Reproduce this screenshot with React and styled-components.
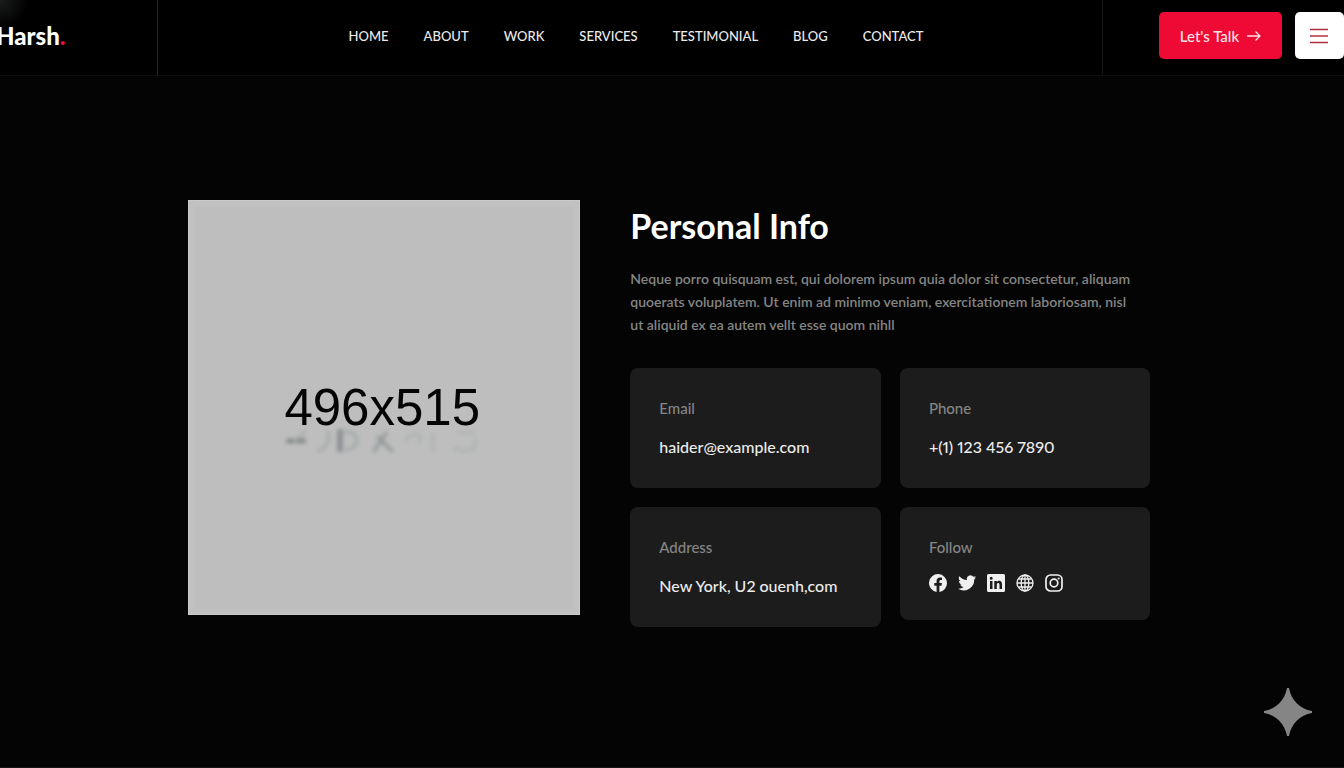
import React from "react";
import styled, { createGlobalStyle } from "styled-components";

const GlobalStyle = createGlobalStyle`
  * { box-sizing: border-box; }
  html { background: #040404; }
  body {
    margin: 0;
    min-height: 100vh;
    color: #f4f4f4;
    background: #040404;
    font-family: Lato, "Liberation Sans", sans-serif;
    font-variant-numeric: proportional-nums;
    overflow-x: hidden;
  }
  h1, p, dl, dt, dd, ul, figure { margin: 0; padding: 0; }
  a { color: inherit; text-decoration: none; }
`;

const Page = styled.div`
  display: flex;
  flex-direction: column;
  min-height: 100vh;
  border-bottom: 1px solid #161616;
`;

const Header = styled.header`
  display: grid;
  grid-template-columns: 158px 1fr 242px;
  height: 76px;
  background: #000;
  border-bottom: 1px solid #101010;
`;

const LogoCell = styled.div`
  display: flex;
  align-items: center;
  padding-bottom: 4px;
  overflow: hidden;
  border-right: 1px solid #242424;
  background: radial-gradient(circle at 0 0, #1b1d1d, transparent 28px);
`;

const Logo = styled.a`
  margin-left: -4px;
  font-size: 24px;
  line-height: 32px;
  font-weight: 900;
  color: #fff;
`;

const Dot = styled.span`
  color: #e8103c;
`;

const Nav = styled.nav`
  display: flex;
  align-items: center;
  justify-content: center;
  gap: 35px;
  padding: 0 0 4px 12px;
`;

const NavLink = styled.a`
  font-size: 13px;
  line-height: 20px;
  font-weight: 500;
  color: #ececec;
  white-space: nowrap;
`;

const Actions = styled.div`
  display: flex;
  align-items: center;
  justify-content: flex-end;
  gap: 13px;
  padding-bottom: 4px;
  border-left: 1px solid #141414;
`;

const TalkButton = styled.button`
  display: flex;
  align-items: center;
  justify-content: center;
  gap: 8px;
  width: 123px;
  height: 47px;
  padding: 0;
  border: 0;
  border-radius: 5px;
  background: #ee0a35;
  color: #ffe3e6;
  font: 500 15px/20px Lato, "Liberation Sans", sans-serif;
  white-space: nowrap;
`;

const MenuButton = styled.button`
  display: flex;
  align-items: center;
  justify-content: center;
  width: 49px;
  height: 47px;
  padding: 0 2px 0 0;
  border: 0;
  border-radius: 5px;
  background: #fff;
  color: #b5303f;
`;

const Main = styled.main`
  display: grid;
  grid-template-columns: 392fr 520fr;
  column-gap: 50px;
  align-items: start;
  padding: 124px 14.4% 60px 14%;
`;

const Photo = styled.figure`
  position: relative;
  display: flex;
  align-items: center;
  justify-content: center;
  height: 415px;
  padding-right: 4px;
  border: 1px solid #cbcbcb;
  background: #bebebe;
  box-shadow: inset 0 0 0 5px #c1c1c1;
  color: #050505;
  font: 51px/60px "Liberation Sans", sans-serif;
`;

const Reflection = styled.svg`
  position: absolute;
  top: 50%;
  left: 50%;
  width: 210px;
  height: 50px;
  margin: 12px 0 0 -106px;
`;

const Info = styled.section`
  padding-top: 4px;
`;

const Title = styled.h1`
  font-size: 34px;
  line-height: 44px;
  font-weight: 700;
  color: #fff;
`;

const Intro = styled.p`
  margin-top: 19px;
  font-size: 14px;
  line-height: 23px;
  font-weight: 600;
  color: #858583;
`;

const Line = styled.span`
  display: block;
  white-space: nowrap;
`;

const Cards = styled.dl`
  display: grid;
  grid-template-columns: 1fr 1fr;
  gap: 19px;
  align-items: start;
  margin-top: 32px;
`;

const Card = styled.div`
  padding: 29px 29px 0;
  height: ${(p) => (p.$short ? 113 : 120)}px;
  border-radius: 8px;
  background: #1c1c1c;
`;

const Label = styled.dt`
  font-size: 15px;
  line-height: 22px;
  font-weight: 500;
  color: #858585;
`;

const Value = styled.dd`
  margin-top: 16px;
  font-size: 16px;
  line-height: 24px;
  font-weight: 500;
  color: #ebebeb;
  white-space: nowrap;
`;

const Socials = styled.dd`
  display: flex;
  gap: 11px;
  margin: 16px 0 0;
`;

const SocialLink = styled.a`
  display: flex;
  color: #f0f0f0;
`;

const Spark = styled.svg`
  position: fixed;
  right: 32px;
  bottom: 32px;
  width: 48px;
  height: 48px;
`;

const navItems = ["Home", "About", "Work", "Services", "Testimonial", "Blog", "Contact"];

const contacts = [
  { label: "Email", value: "haider@example.com" },
  { label: "Phone", value: "+(1) 123 456 7890" },
  { label: "Address", value: "New York, U2 ouenh,com" },
];

const icons = {
  Facebook: (
    <path fill="currentColor" d="M18 9.05A9 9 0 1 0 7.6 18v-6.3H5.3V9.05h2.3v-2c0-2.3 1.35-3.5 3.4-3.5.95 0 2 .17 2 .17V6h-1.15c-1.1 0-1.45.7-1.45 1.4v1.65h2.5l-.4 2.65h-2.1V18A9 9 0 0 0 18 9.05Z" />
  ),
  Twitter: (
    <path fill="currentColor" d="M18 3.3a7 7 0 0 1-2 .6 3.6 3.6 0 0 0 1.6-2c-.7.4-1.5.7-2.3.9a3.6 3.6 0 0 0-6.3 3.3A10.4 10.4 0 0 1 1.4 2.2a3.7 3.7 0 0 0 1.2 5c-.6 0-1.2-.2-1.7-.5 0 1.9 1.2 3.4 2.9 3.8-.5.1-1.1.1-1.6 0 .5 1.5 1.8 2.5 3.4 2.6A7.5 7.5 0 0 1 0 14.7a10.5 10.5 0 0 0 16.2-9.3A7 7 0 0 0 18 3.3Z" />
  ),
  LinkedIn: (
    <path fill="currentColor" fillRule="evenodd" d="M1.5 0h15q1.5 0 1.5 1.5v15q0 1.5-1.5 1.5h-15Q0 18 0 16.5v-15Q0 0 1.5 0ZM3 7v8h2.500V7ZM4.200 2.800a1.500 1.500 0 1 0 0 3 1.500 1.500 0 0 0 0-3ZM7.300 7v8h2.500v-4.200c0-2.200 2.700-2.300 2.700 0V15H15v-5c0-3.500-3.800-4-5.200-1.900V7Z" />
  ),
  Website: (
    <g fill="none" stroke="currentColor" strokeWidth="1.3">
      <circle cx="9" cy="9" r="8" />
      <ellipse cx="9" cy="9" rx="3.8" ry="8" />
      <path d="M9 1v16M1 9h16M2.300 5h13.400M2.300 13h13.400" />
    </g>
  ),
  Instagram: (
    <g fill="none" stroke="currentColor" strokeWidth="1.7">
      <rect x="1" y="1" width="16" height="16" rx="4.5" />
      <circle cx="9" cy="9" r="3.8" />
      <circle cx="13.6" cy="4.4" r="1" fill="currentColor" stroke="none" />
    </g>
  ),
};

export default function App() {
  return (
    <Page>
      <GlobalStyle />
      <Header>
        <LogoCell>
          <Logo href="#home">Harsh<Dot>.</Dot></Logo>
        </LogoCell>
        <Nav aria-label="Main">
          {navItems.map((item) => (
            <NavLink key={item} href={`#${item.toLowerCase()}`}>{item.toUpperCase()}</NavLink>
          ))}
        </Nav>
        <Actions>
          <TalkButton type="button">
            Let's Talk
            <svg width="14" height="12" viewBox="0 0 14 12" fill="none" stroke="currentColor" strokeWidth="1.3" aria-hidden="true">
              <path d="M0 6h13M8.500 1.500 13 6l-4.500 4.500" />
            </svg>
          </TalkButton>
          <MenuButton type="button" aria-label="Menu">
            <svg width="18" height="16" viewBox="0 0 18 16" fill="none" stroke="currentColor" strokeWidth="1.7" aria-hidden="true">
              <path d="M0 1.500h18M0 8h18M0 14.500h18" />
            </svg>
          </MenuButton>
        </Actions>
      </Header>

      <Main>
        <Photo>
          496x515
          <Reflection viewBox="0 0 210 50" fill="none" aria-hidden="true">
            <defs>
              <filter id="soften" x="-20%" y="-40%" width="140%" height="180%">
                <feGaussianBlur stdDeviation="2" />
              </filter>
            </defs>
            <g filter="url(#soften)" strokeLinecap="round">
              <path d="M10 21h16" stroke="#777b7c" strokeWidth="4" />
              <path d="m27 12-10 9m33-9c2 9-2 17-10 19" stroke="#a4a8a9" strokeWidth="3" />
              <path d="M62 11v19" stroke="#858a8c" strokeWidth="5" />
              <path d="M65 12c16-3 20 16 3 18" stroke="#a3a8aa" strokeWidth="3" />
              <path d="m108 13-12 18m4-14 14 14" stroke="#8d9294" strokeWidth="3" />
              <path d="M128 21c3-10 22-8 12 2M155 13v17M176 28c14 6 24 2 21-9M180 13h16" stroke="#adb1b2" strokeWidth="3" />
            </g>
          </Reflection>
        </Photo>

        <Info>
          <Title>Personal Info</Title>
          <Intro>
            <Line>Neque porro quisquam est, qui dolorem ipsum quia dolor sit consectetur, aliquam</Line>
            <Line>quoerats voluplatem. Ut enim ad minimo veniam, exercitationem laboriosam, nisl</Line>
            <Line>ut aliquid ex ea autem vellt esse quom nihll</Line>
          </Intro>
          <Cards>
            {contacts.map(({ label, value }) => (
              <Card key={label}>
                <Label>{label}</Label>
                <Value>{value}</Value>
              </Card>
            ))}
            <Card $short>
              <Label>Follow</Label>
              <Socials>
                {Object.entries(icons).map(([name, drawing]) => (
                  <SocialLink key={name} href={`#${name.toLowerCase()}`} aria-label={name}>
                    <svg width="18" height="18" viewBox="0 0 18 18" aria-hidden="true">{drawing}</svg>
                  </SocialLink>
                ))}
              </Socials>
            </Card>
          </Cards>
        </Info>
      </Main>

      <Spark viewBox="0 0 48 48" aria-hidden="true">
        <path fill="#858585" d="M23 0h2c2 12 11 21 23 23v2c-12 2-21 11-23 23h-2C21 36 12 27 0 25v-2C12 21 21 12 23 0Z" />
      </Spark>
    </Page>
  );
}
